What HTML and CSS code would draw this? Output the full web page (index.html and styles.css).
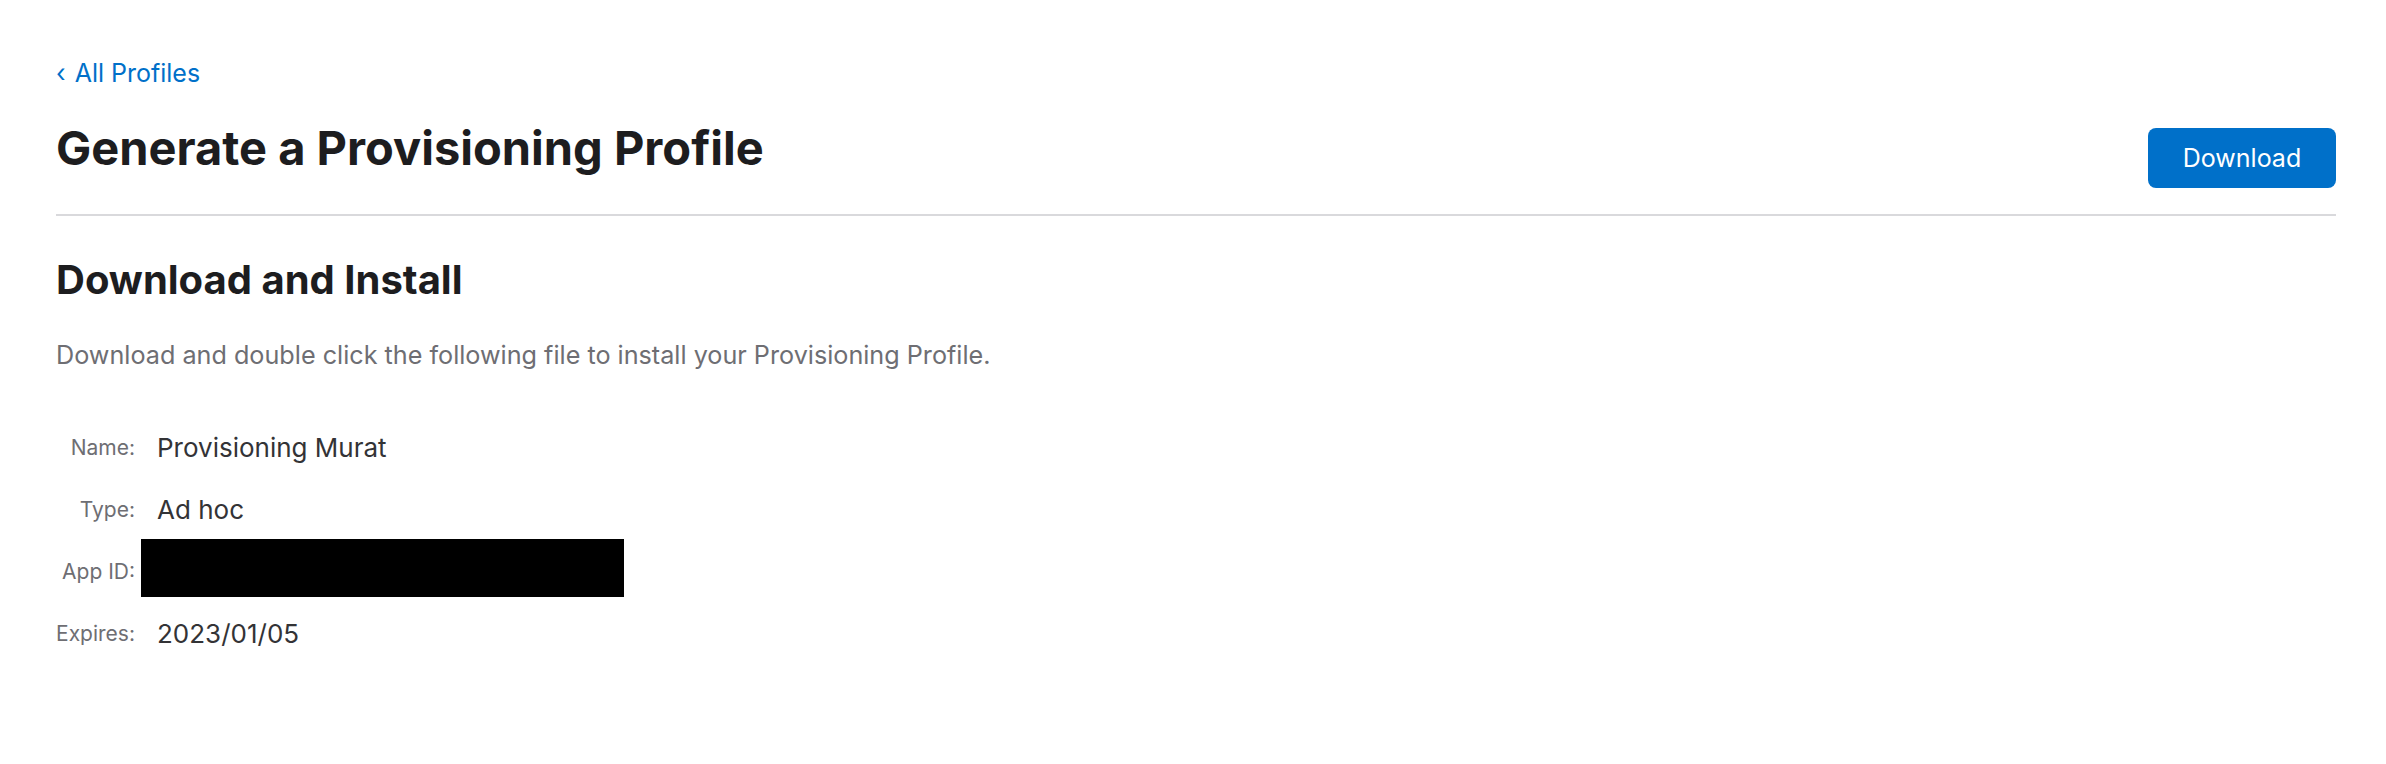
FILE: index.html
```html
<!DOCTYPE html>
<html lang="en">
<head>
<meta charset="utf-8">
<title>Generate a Provisioning Profile</title>
<link rel="stylesheet" href="styles.css">
</head>
<body>
<main class="page">
  <a class="back-link" href="#"><span class="chev">‹</span> All Profiles</a>
  <header class="header">
    <h1 class="title">Generate a Provisioning Profile</h1>
    <button class="btn-download" type="button">Download</button>
  </header>
  <section class="install">
    <h2 class="subtitle">Download and Install</h2>
    <p class="desc">Download and double click the following file to install your Provisioning Profile.</p>
    <dl class="details">
      <dt class="label">Name:</dt>
      <dd class="value">Provisioning Murat</dd>
      <dt class="label">Type:</dt>
      <dd class="value">Ad hoc</dd>
      <dt class="label">App ID:</dt>
      <dd class="value"><div class="redacted"></div></dd>
      <dt class="label">Expires:</dt>
      <dd class="value">2023/01/05</dd>
    </dl>
  </section>
</main>
</body>
</html>
```

FILE: styles.css
```css
html, body {
  margin: 0;
  padding: 0;
  background: #ffffff;
}

body {
  font-family: Inter, "Noto Sans", "Liberation Sans", sans-serif;
  color: #1d1d1f;
}

.page {
  padding: 58px 50px 0 56px;
  display: flex;
  flex-direction: column;
  align-items: stretch;
}

.back-link {
  align-self: flex-start;
  font-size: 25px;
  line-height: 30px;
  color: #0070c9;
  text-decoration: none;
}

.chev {
  display: inline-block;
  margin-right: 2px;
}

.header {
  margin-top: 32px;
  display: flex;
  justify-content: space-between;
  align-items: flex-start;
  padding-bottom: 26px;
  border-bottom: 2px solid #d9d9dc;
}

.title {
  margin: 0;
  font-size: 47px;
  line-height: 56px;
  font-weight: 700;
  color: #1d1d1f;
  letter-spacing: 0;
}

.btn-download {
  margin-top: 8px;
  width: 188px;
  height: 60px;
  border: none;
  border-radius: 8px;
  background: #0070c9;
  color: #ffffff;
  font-family: inherit;
  font-size: 25px;
  padding: 0;
}

.install {
  display: flex;
  flex-direction: column;
}

.subtitle {
  margin: 39px 0 0;
  font-size: 40px;
  line-height: 50px;
  font-weight: 700;
  color: #1d1d1f;
}

.desc {
  margin: 32px 0 0;
  font-size: 25.2px;
  line-height: 36px;
  color: #6e6e73;
}

.details {
  margin: 44px 0 0;
  display: grid;
  grid-template-columns: 79px auto;
  grid-auto-rows: 62px;
  column-gap: 22px;
  align-items: center;
  justify-content: start;
}

.label {
  margin: 0;
  text-align: right;
  font-size: 21px;
  line-height: 28px;
  color: #6e6e73;
  white-space: nowrap;
}

.value {
  margin: 0;
  font-size: 26px;
  line-height: 36px;
  color: #333336;
}

.redacted {
  width: 483px;
  height: 58px;
  margin-left: -16px;
  margin-top: -8px;
  background: #000000;
}
```
